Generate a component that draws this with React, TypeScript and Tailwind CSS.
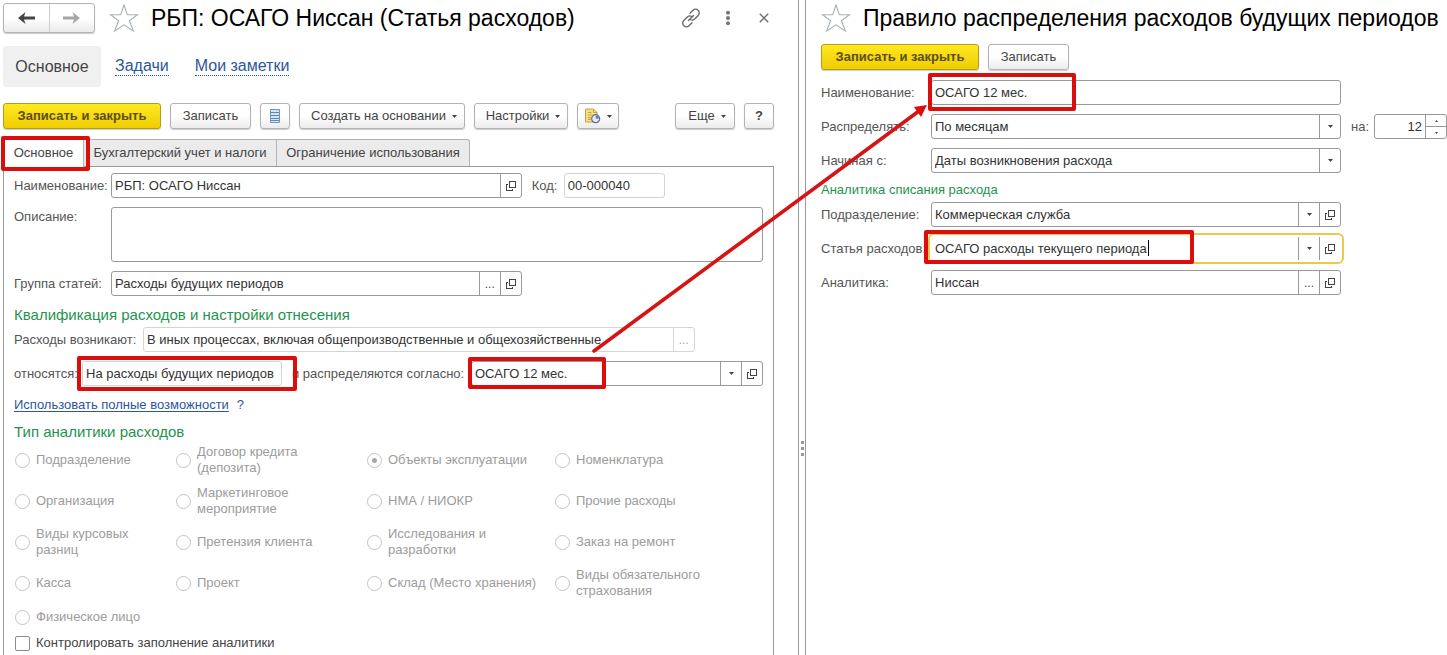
import { useState } from "react";
import type { InputHTMLAttributes, ReactNode } from "react";
import clsx from "clsx";

/* ── icons ── */

const Star = () => (
  <svg width="30" height="28" viewBox="0 0 30 28" className="shrink-0" fill="none" stroke="#a9b0b8" strokeWidth="1.1">
    <path d="M15 1 18.3 10.8H28.5L20.4 16.8 24.4 27 15 20.8 5.6 27 9.6 16.8 1.5 10.8H11.7Z" />
  </svg>
);

const NavArrow = ({ back = false }: { back?: boolean }) => (
  <svg width="17" height="12" viewBox="0 0 17 12" fill={back ? "#444" : "#a6a6a6"}>
    <path d={back ? "M0 6 7.5 0 6 4.4H17V7.6H6L7.5 12Z" : "M17 6 9.5 0 11 4.4H0V7.6H11L9.5 12Z"} />
  </svg>
);

const LinkIcon = () => (
  <svg width="20" height="20" viewBox="0 0 20 20" fill="none" stroke="#6b6b6b" strokeWidth="1.4" strokeLinecap="round">
    <path d="M9 5.2 12 2.3a3.6 3.6 0 0 1 5.2 5.1L13.6 11a3.6 3.6 0 0 1-4.4.5" />
    <path d="M11 14.8 8 17.7a3.6 3.6 0 0 1-5.2-5.1L6.4 9a3.6 3.6 0 0 1 4.4-.5" />
    <path d="M7.4 12.6 12.6 7.4" />
  </svg>
);

const DotsIcon = () => (
  <svg width="6" height="16" viewBox="0 0 6 16" fill="#757575">
    <circle cx="3" cy="2.8" r="2" />
    <circle cx="3" cy="8" r="2" />
    <circle cx="3" cy="13.2" r="2" />
  </svg>
);

const CloseIcon = () => (
  <svg width="10" height="10" viewBox="0 0 10 10" stroke="#707070" strokeWidth="1.5">
    <path d="M.8.8 9.2 9.2M9.2.8.8 9.2" />
  </svg>
);

const Caret = () => (
  <svg width="5" height="3" viewBox="0 0 5 3" fill="#444">
    <path d="M0 0H5L2.5 3Z" />
  </svg>
);

const OpenIcon = () => (
  <svg width="10" height="10" viewBox="0 0 10 10" fill="none" stroke="#444" shapeRendering="crispEdges">
    <path d="M3.5.5H9.5V6.5H3.5ZM2 3.5H.5V9.5H6.5V8" />
  </svg>
);

const ListIcon = () => (
  <svg width="10" height="14" viewBox="0 0 10 14">
    <path fill="#cfe3f3" stroke="#6f97bb" d="M.5.5H9.5V13.5H.5Z" />
    <path stroke="#5f8bb3" d="M1 3.5H9M1 6.5H9M1 9.5H9M1 11.5H9" />
  </svg>
);

const ReportIcon = () => (
  <svg width="16" height="16" viewBox="0 0 16 16" fill="none">
    <path fill="#f6dc85" stroke="#c9a443" d="M.5 1H8.5L12 4.5V14H.5Z" />
    <path stroke="#c9a443" d="M8.5 1V4.5H12M3 4.5H6.5M3 7H7M3 9.5H6M3 11.5H6" />
    <circle cx="10.7" cy="10.7" r="4" fill="#e8eef8" stroke="#5a6ca0" strokeWidth="1.2" />
    <path fill="#6a7bb0" d="M10.7 10.7V7.5A3.2 3.2 0 0 1 13.9 10.7Z" />
  </svg>
);

/* ── controls ── */

interface BtnProps {
  children: ReactNode;
  className?: string;
  primary?: boolean;
  label?: string;
}

const Btn = ({ children, className, primary, label }: BtnProps) => (
  <button
    type="button"
    aria-label={label}
    className={clsx(
      "flex h-[26px] shrink-0 items-center justify-center rounded-[3px] border text-[13px] shadow-[0_1px_1px_rgba(0,0,0,0.2)]",
      primary
        ? "border-[#b59e13] bg-linear-to-b from-[#ffe81f] to-[#efcd00] font-bold text-[#5c4f14]"
        : "border-[#b3b3b3] bg-linear-to-b from-white from-50% to-[#ebebeb] text-[#444]",
      className,
    )}
  >
    {children}
  </button>
);

const SideBtn = ({ children, label, muted }: { children: ReactNode; label: string; muted?: boolean }) => (
  <button
    type="button"
    aria-label={label}
    className={clsx(
      "flex w-[21px] shrink-0 items-center justify-center border-l text-[12px]",
      muted ? "border-[#d4d4d4] text-[#aaa]" : "border-[#999] text-[#444]",
    )}
  >
    {children}
  </button>
);

const OpenBtn = () => (
  <SideBtn label="Открыть">
    <OpenIcon />
  </SideBtn>
);

/* red marker frame drawn over a control */
const Mark = ({ className }: { className: string }) => (
  <span className={clsx("pointer-events-none absolute z-10 rounded-[2px] border-4 border-[#dc0d0d]", className)} />
);

const box = "relative flex h-[25px] rounded-[3px] border bg-white";

interface FieldProps extends InputHTMLAttributes<HTMLInputElement> {
  boxClass?: string;
  children?: ReactNode;
}

const Field = ({ boxClass = "border-[#999]", children, className, ...rest }: FieldProps) => (
  <div className={clsx(box, boxClass)}>
    <input
      {...rest}
      className={clsx("w-full min-w-0 flex-1 bg-transparent px-[3px] text-[13px] text-[#333] outline-none", className)}
    />
    {children}
  </div>
);

interface PickProps {
  id: string;
  value: string;
  boxClass?: string;
  children?: ReactNode;
}

const Pick = ({ id, value, boxClass = "border-[#999]", children }: PickProps) => (
  <div className={clsx(box, boxClass)}>
    <div className="grid min-w-0 flex-1">
      <select
        id={id}
        className="col-start-1 row-start-1 w-full appearance-none bg-transparent pr-6 pl-[3px] text-[13px] text-[#333] outline-none"
      >
        <option>{value}</option>
      </select>
      <span className="pointer-events-none col-start-1 row-start-1 flex w-[21px] items-center justify-center justify-self-end border-l border-[#999]">
        <Caret />
      </span>
    </div>
    {children}
  </div>
);

/* ── analytics types ── */

const analytics = [
  "Подразделение",
  "Договор кредита\n(депозита)",
  "Объекты эксплуатации",
  "Номенклатура",
  "Организация",
  "Маркетинговое\nмероприятие",
  "НМА / НИОКР",
  "Прочие расходы",
  "Виды курсовых\nразниц",
  "Претензия клиента",
  "Исследования и\nразработки",
  "Заказ на ремонт",
  "Касса",
  "Проект",
  "Склад (Место хранения)",
  "Виды обязательного\nстрахования",
  "Физическое лицо",
];

const ExpenseItem = () => (
  <section className="flex min-w-0 flex-col border-r border-[#999] pt-[3px] pr-6 pl-[3px]">
    {/* header */}
    <header className="flex h-[30px] items-center">
      <div className="flex h-[30px] w-[92px] shrink-0 rounded-[3px] border border-[#b3b3b3] bg-linear-to-b from-white from-50% to-[#ebebeb] shadow-[0_1px_1px_rgba(0,0,0,0.2)]">
        <button type="button" aria-label="Назад" className="flex flex-1 items-center justify-center border-r border-[#ccc]">
          <NavArrow back />
        </button>
        <button type="button" aria-label="Вперед" className="flex flex-1 items-center justify-center">
          <NavArrow />
        </button>
      </div>
      <div className="ml-3.5 flex">
        <Star />
      </div>
      <h1 className="ml-3 flex-1 text-[23px] whitespace-nowrap text-black">РБП: ОСАГО Ниссан (Статья расходов)</h1>
      <div className="flex items-center gap-6 pr-[5px]">
        <button type="button" aria-label="Ссылка"><LinkIcon /></button>
        <button type="button" aria-label="Меню"><DotsIcon /></button>
        <button type="button" aria-label="Закрыть" className="pl-1"><CloseIcon /></button>
      </div>
    </header>

    {/* navigation */}
    <nav className="mt-[13px] flex h-[41px] items-center text-[16px] leading-[18px]">
      <span className="flex h-full w-[98px] items-center justify-center rounded-[3px] bg-[#f0f0f0] text-[#444]">Основное</span>
      <a href="#tasks" className="ml-3.5 border-b border-dotted border-[#2c569e] text-[#2c569e]">Задачи</a>
      <a href="#notes" className="ml-[26px] border-b border-dotted border-[#2c569e] text-[#2c569e]">Мои заметки</a>
    </nav>

    {/* toolbar */}
    <div className="mt-4 flex gap-[9px]">
      <Btn primary className="w-[158px]">Записать и закрыть</Btn>
      <Btn className="w-[81px]">Записать</Btn>
      <Btn className="w-[30px]" label="Список"><ListIcon /></Btn>
      <Btn className="w-[166px] gap-1.5 pl-1">Создать на основании <Caret /></Btn>
      <Btn className="w-[94px] gap-1.5 pl-1">Настройки <Caret /></Btn>
      <Btn className="w-[42px] gap-1.5" label="Отчеты"><ReportIcon /><Caret /></Btn>
      <div className="flex-1" />
      <Btn className="w-[60px] gap-1.5 pl-1">Еще <Caret /></Btn>
      <Btn className="w-[30px]"><b>?</b></Btn>
    </div>

    {/* tabs */}
    <div role="tablist" className="mt-2.5 flex h-[27px] text-[13px] text-[#444]">
      <button type="button" role="tab" aria-selected="true" className="relative -mb-px w-[81px] border border-b-0 border-[#b3b3b3] bg-white pb-0.5">
        Основное
        <Mark className="-top-1 -right-[7px] -bottom-1 -left-[3px]" />
      </button>
      <button type="button" role="tab" aria-selected="false" className="w-[193px] border-t border-r border-[#b3b3b3] bg-[#ebebeb]">Бухгалтерский учет и налоги</button>
      <button type="button" role="tab" aria-selected="false" className="w-[193px] rounded-tr-[3px] border-t border-r border-[#b3b3b3] bg-[#ebebeb]">Ограничение использования</button>
    </div>

    <div className="flex flex-1 flex-col border border-b-0 border-[#999] px-2.5 pt-1.5 text-[13px] text-[#555]">
      <div className="flex items-center">
        <label htmlFor="name" className="w-[97px] shrink-0">Наименование:</label>
        <div className="flex flex-1 items-center">
          <div className="w-[63%]">
            <Field id="name" defaultValue="РБП: ОСАГО Ниссан"><OpenBtn /></Field>
          </div>
          <label htmlFor="code" className="ml-2.5 w-8">Код:</label>
          <div className="w-[101px]">
            <Field id="code" readOnly value="00-000040" boxClass="border-[#d4d4d4]" />
          </div>
        </div>
      </div>

      <div className="mt-[9px] flex">
        <label htmlFor="descr" className="w-[97px] shrink-0">Описание:</label>
        <textarea id="descr" className="h-[55px] flex-1 resize-none rounded-[3px] border border-[#999] px-[3px] outline-none" />
      </div>

      <div className="mt-[9px] flex items-center">
        <label htmlFor="group" className="w-[97px] shrink-0">Группа статей:</label>
        <div className="flex-1">
          <div className="w-[63%]">
            <Field id="group" defaultValue="Расходы будущих периодов">
              <SideBtn label="Выбрать">...</SideBtn>
              <OpenBtn />
            </Field>
          </div>
        </div>
      </div>

      <h2 className="mt-[9px] text-[15px] leading-5 text-[#1f9350]">Квалификация расходов и настройки отнесения</h2>

      <div className="mt-0.5 flex items-center">
        <label htmlFor="origin" className="w-[129px] shrink-0">Расходы возникают:</label>
        <div className="flex-1">
          <div className="w-[89%]">
            <Field id="origin" readOnly value="В иных процессах, включая общепроизводственные и общехозяйственные" boxClass="border-[#d4d4d4]">
              <SideBtn label="Выбрать" muted>...</SideBtn>
            </Field>
          </div>
        </div>
      </div>

      <div className="mt-[9px] flex items-center">
        <label htmlFor="target" className="w-[68px] shrink-0">относятся:</label>
        <div className="relative w-[200px] shrink-0">
          <Field id="target" readOnly value="На расходы будущих периодов" boxClass="border-[#d4d4d4]" />
          <Mark className="-inset-y-[5px] -right-[15px] -left-[5px]" />
        </div>
        <label htmlFor="rule" className="ml-2.5 w-[179px] shrink-0 whitespace-nowrap">и распределяются согласно:</label>
        <div className="relative flex-1">
          <Pick id="rule" value="ОСАГО 12 мес."><OpenBtn /></Pick>
          <Mark className="-top-1 -bottom-[3px] -left-[3px] w-[138px]" />
        </div>
      </div>

      <div className="mt-[9px] flex gap-2 leading-5">
        <a href="#full" className="text-[#2c569e] underline underline-offset-2">Использовать полные возможности</a>
        <a href="#help" className="text-[#2c569e]">?</a>
      </div>

      <h2 className="mt-[7px] text-[15px] leading-5 text-[#1f9350]">Тип аналитики расходов</h2>

      <div className="mt-0.5 grid grid-cols-[161fr_191fr_188fr_208fr] grid-rows-[repeat(4,32px)_18px] gap-y-[9px] pl-px leading-4 text-[#9c9c9c]">
        {analytics.map((text) => (
          <label key={text} className="flex items-center gap-1.5 whitespace-pre-line">
            <input
              type="radio"
              name="analytics"
              disabled
              defaultChecked={text === "Объекты эксплуатации"}
              className="size-[15px] shrink-0 appearance-none rounded-full border border-[#c4c4c4] bg-white checked:bg-[radial-gradient(circle,#a8a8a8_2px,transparent_3px)]"
            />
            {text}
          </label>
        ))}
      </div>

      <label className="mt-2 flex h-[18px] items-center gap-1.5 pl-px text-[#444]">
        <input type="checkbox" className="size-[15px] appearance-none rounded-[2px] border border-[#8c8c8c] bg-white" />
        Контролировать заполнение аналитики
      </label>
    </div>
  </section>
);

const row = "grid grid-cols-[110px_1fr_106px] items-center";

const DistributionRule = () => {
  const [months, setMonths] = useState(12);

  return (
    <section className="flex min-w-0 flex-col border-l border-[#999] pt-[3px] pl-[15px] text-[13px] text-[#555]">
      <header className="flex h-[30px] items-center gap-3">
        <Star />
        <h1 className="text-[23px] whitespace-nowrap text-black">Правило распределения расходов будущих периодов</h1>
      </header>

      <div className="mt-[11px] flex gap-[9px]">
        <Btn primary className="w-[158px]">Записать и закрыть</Btn>
        <Btn className="w-[81px]">Записать</Btn>
      </div>

      <div className="mt-2.5 flex flex-col gap-[9px]">
        <div className={row}>
          <label htmlFor="rule-name">Наименование:</label>
          <div className="relative">
            <Field id="rule-name" defaultValue="ОСАГО 12 мес." />
            <Mark className="-top-[7px] -bottom-[6px] -left-[3px] w-[148px]" />
          </div>
        </div>

        <div className={row}>
          <label htmlFor="spread">Распределять:</label>
          <Pick id="spread" value="По месяцам" />
          <div className="flex items-center justify-between pl-2.5">
            <label htmlFor="months">на:</label>
            <div className={clsx(box, "w-[73px] border-[#999]")}>
              <input
                id="months"
                type="number"
                value={months}
                onChange={(e) => setMonths(Number(e.target.value))}
                className="w-0 flex-1 bg-transparent pr-[3px] text-right text-[13px] text-[#333] outline-none [appearance:textfield] [&::-webkit-inner-spin-button]:appearance-none"
              />
              <div className="flex w-[21px] flex-col border-l border-[#999]">
                <button type="button" aria-label="Больше" onClick={() => setMonths(months + 1)} className="flex flex-1 items-center justify-center border-b border-[#999]">
                  <svg width="3" height="2" viewBox="0 0 3 2" fill="#444"><path d="M0 2H3L1.5 0Z" /></svg>
                </button>
                <button type="button" aria-label="Меньше" onClick={() => setMonths(months - 1)} className="flex flex-1 items-center justify-center">
                  <svg width="3" height="2" viewBox="0 0 3 2" fill="#444"><path d="M0 0H3L1.5 2Z" /></svg>
                </button>
              </div>
            </div>
          </div>
        </div>

        <div className={row}>
          <label htmlFor="since">Начиная с:</label>
          <Pick id="since" value="Даты возникновения расхода" />
        </div>
      </div>

      <h2 className="mt-[7px] leading-5 text-[#1f9350]">Аналитика списания расхода</h2>

      <div className="mt-0.5 flex flex-col gap-[9px]">
        <div className={row}>
          <label htmlFor="dept">Подразделение:</label>
          <Pick id="dept" value="Коммерческая служба"><OpenBtn /></Pick>
        </div>

        <div className={row}>
          <label htmlFor="item" className="whitespace-nowrap">Статья расходов:</label>
          <div className="relative">
            <Field
              id="item"
              defaultValue="ОСАГО расходы текущего периода"
              boxClass="border-white outline-2 outline-offset-1 outline-[#e8cb4a]"
            >
              <SideBtn label="Список"><Caret /></SideBtn>
              <OpenBtn />
            </Field>
            {/* text cursor */}
            <span className="absolute top-1 left-[217px] h-4 w-px bg-black" />
            <Mark className="-top-[6px] -bottom-[3px] -left-[7px] w-[270px]" />
          </div>
        </div>

        <div className={row}>
          <label htmlFor="dimension">Аналитика:</label>
          <Field id="dimension" defaultValue="Ниссан">
            <SideBtn label="Выбрать">...</SideBtn>
            <OpenBtn />
          </Field>
        </div>
      </div>
    </section>
  );
};

export default function App() {
  return (
    <main className="relative grid min-h-screen grid-cols-[799fr_6fr_642fr] overflow-hidden bg-white font-['Liberation_Sans',Arial,sans-serif]">
      <ExpenseItem />

      {/* splitter grip */}
      <div className="flex flex-col items-center gap-[3px] pt-[441px]">
        <i className="size-[3px] bg-[#999]" />
        <i className="size-[3px] bg-[#999]" />
        <i className="size-[3px] bg-[#999]" />
      </div>

      <DistributionRule />

      {/* arrow from the chosen rule to its card */}
      <svg
        viewBox="0 0 1447 655"
        preserveAspectRatio="none"
        className="pointer-events-none absolute top-0 left-0 z-20 h-[655px] w-full"
      >
        <path d="M594 351 919 111" stroke="#d51414" strokeWidth="3.6" strokeLinecap="round" />
        <path d="M927 105 914 107 921 117Z" fill="#e00b0b" />
      </svg>
    </main>
  );
}
